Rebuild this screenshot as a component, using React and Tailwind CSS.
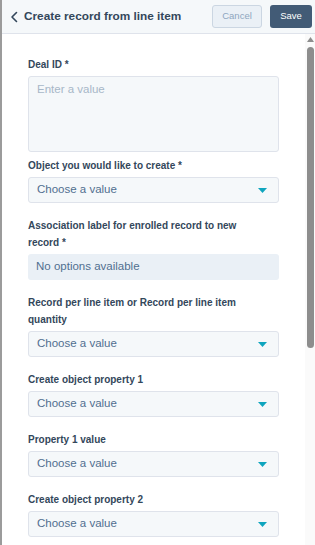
const FONT = { fontFamily: '"Liberation Sans", Arial, sans-serif' };

function Label({ children, className = '' }) {
  return (
    <p className={`text-[10px] leading-[17px] font-bold text-[#33475b] mb-[3px] ${className}`}>
      {children}
    </p>
  );
}

function Select({ placeholder = 'Choose a value' }) {
  return (
    <div className="h-[26px] w-[251px] bg-[#f5f8fa] border border-[#dfe3eb] rounded-[3px] flex items-center justify-between pl-[8px] pr-[11px]">
      <span className="text-[11.5px] text-[#516f90]">{placeholder}</span>
      <svg width="9" height="5" viewBox="0 0 9 5">
        <path d="M0 0 H9 L4.5 5 Z" fill="#0fa5be" />
      </svg>
    </div>
  );
}

export default function App() {
  return (
    <div className="w-[315px] h-[545px] overflow-hidden bg-white flex flex-col border-l-2 border-[#9b9b9b]" style={FONT}>
      {/* Header */}
      <div className="h-[34px] shrink-0 bg-[#f5f8fa] border-b border-[#dfe3eb] flex items-center justify-between pl-[8px] pr-[3px]">
        <div className="flex items-center gap-[4px]">
          <svg width="10" height="12" viewBox="0 0 10 12">
            <path d="M6.5 1.5 L2 6 L6.5 10.5" fill="none" stroke="#33475b" strokeWidth="1.6" strokeLinecap="round" strokeLinejoin="round" />
          </svg>
          <span className="text-[11.8px] font-bold text-[#33475b]">Create record from line item</span>
        </div>
        <div className="flex items-center gap-[8px]">
          <button className="h-[23px] w-[50px] rounded-[3px] bg-[#eaf0f6] border border-[#cbd6e2] text-[9.5px] text-[#8ea6bf]">
            Cancel
          </button>
          <button className="h-[23px] w-[42px] rounded-[3px] bg-[#425b76] text-[9.5px] text-white">
            Save
          </button>
        </div>
      </div>

      {/* Body */}
      <div className="flex-1 flex">
        <div className="flex-1 pl-[26px] pt-[22px]">
          <Label>Deal ID *</Label>
          <div className="h-[76px] w-[251px] bg-[#f5f8fa] border border-[#dfe3eb] rounded-[3px] px-[8px] pt-[7px]">
            <span className="block text-[11.5px] leading-none text-[#a7b7c8]">Enter a value</span>
          </div>

          <Label className="mt-[5px]">Object you would like to create *</Label>
          <Select />

          <Label className="mt-[14px] w-[220px]">Association label for enrolled record to new record *</Label>
          <div className="h-[26px] w-[251px] bg-[#eaf0f6] rounded-[3px] flex items-center pl-[8px]">
            <span className="text-[11.5px] text-[#516f90]">No options available</span>
          </div>

          <Label className="mt-[14px] w-[220px]">Record per line item or Record per line item quantity</Label>
          <Select />

          <Label className="mt-[14px]">Create object property 1</Label>
          <Select />

          <Label className="mt-[14px]">Property 1 value</Label>
          <Select />

          <Label className="mt-[14px]">Create object property 2</Label>
          <Select />
        </div>

        {/* Scrollbar */}
        <div className="w-[10px] bg-[#fafafa] flex flex-col items-center pt-[3px]">
          <svg width="7" height="5" viewBox="0 0 7 5">
            <path d="M0 5 L3.5 0 L7 5 Z" fill="#8d8d8d" />
          </svg>
          <div className="mt-[5px] w-[7px] h-[301px] rounded-full bg-[#8d8d8d]" />
        </div>
      </div>
    </div>
  );
}
